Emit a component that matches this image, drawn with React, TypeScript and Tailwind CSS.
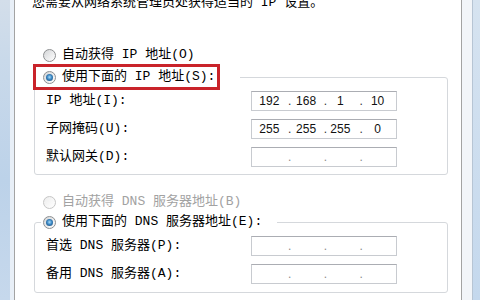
import type { ReactNode } from 'react';

const txt = "font-['Liberation_Mono','Noto_Sans_CJK_SC',monospace] text-[13px] leading-[16px]";

function Radio({ checked = false, disabled = false }: { checked?: boolean; disabled?: boolean }) {
  return (
    <span
      className={`flex h-[13px] w-[13px] shrink-0 items-center justify-center rounded-full border bg-gradient-to-br ${
        disabled ? 'border-[#c6c6c6] from-[#ededed] to-white' : 'border-[#8d8f91] from-[#d4d6d8] to-white'
      }`}
    >
      {checked && (
        <span className="h-[7px] w-[7px] rounded-full bg-[radial-gradient(circle_at_50%_45%,#a8dcfa_0%,#3a86c2_45%,#173f66_100%)]" />
      )}
    </span>
  );
}

function IpBox({ parts }: { parts?: string[] }) {
  const segs = parts ?? ['', '', '', ''];
  const dot = parts ? 'text-[#333]' : 'text-[#8c8c8c]';
  const Dot = () => <span className={`flex w-[2px] justify-center ${dot}`}>.</span>;
  return (
    <div className="flex h-[20px] w-[146px] items-center border border-[#c8cbd0] border-t-[#abadb3] bg-white font-['Liberation_Sans',sans-serif] text-[12px] leading-[18px] text-[#111]">
      <span className="w-[37px] pr-[2px] text-center">{segs[0]}</span>
      <Dot />
      <span className="w-[34px] pr-[3px] text-center">{segs[1]}</span>
      <Dot />
      <span className="w-[34px] pr-[6px] text-center">{segs[2]}</span>
      <Dot />
      <span className="w-[34px] pr-[3px] text-center">{segs[3]}</span>
    </div>
  );
}

function Row({ label, children }: { label: string; children: ReactNode }) {
  return (
    <div className="flex h-[20px] items-center">
      <span className={`${txt} w-[205px] text-black`}>{label}</span>
      {children}
    </div>
  );
}

export default function App() {
  return (
    <div className="flex h-[300px] w-[480px] overflow-hidden bg-white">
      <div className="w-[14px] bg-[linear-gradient(to_bottom,#d3deea_0%,#c9d9ea_20%,#bcd2e9_60%,#c6d8ec_100%)]">
        <div className="ml-[10px] h-full w-[4px] bg-[#e8eff7]" />
      </div>

      <div className="flex w-[448px] flex-col border-x border-[#a3a3a3] bg-white pl-[17px]">
        <p className={`${txt} -mt-[5px] text-black`}>您需要从网络系统管理员处获得适当的 IP 设置。</p>

        <div className="mt-[36px] ml-[11px] flex h-[16px] items-center gap-[6px]">
          <Radio />
          <span className={`${txt} text-black`}>自动获得 IP 地址(O)</span>
        </div>

        <fieldset className="mt-[1px] ml-[2px] w-[414px] rounded-[3px] border border-[#d5d8dc]">
          <legend className="-ml-[2px] pr-[20px]">
            <div className="flex h-[26px] w-[187px] items-center gap-[6px] border-[3px] border-[#c9232a] pl-[7px]">
              <Radio checked />
              <span className={`${txt} text-black`}>使用下面的 IP 地址(S):</span>
            </div>
          </legend>
          <div className="flex flex-col gap-[8px] pt-[1px] pb-[7px] pl-[11px]">
            <Row label="IP 地址(I):">
              <IpBox parts={['192', '168', '1', '10']} />
            </Row>
            <Row label="子网掩码(U):">
              <IpBox parts={['255', '255', '255', '0']} />
            </Row>
            <Row label="默认网关(D):">
              <IpBox />
            </Row>
          </div>
        </fieldset>

        <div className="mt-[19px] ml-[11px] flex h-[16px] items-center gap-[6px]">
          <Radio disabled />
          <span className={`${txt} text-[#a2a2a2]`}>自动获得 DNS 服务器地址(B)</span>
        </div>

        <fieldset className="mt-[4px] ml-[2px] w-[414px] rounded-[3px] border border-[#d5d8dc]">
          <legend className="ml-[6px] pr-[15px] pl-[2px]">
            <div className="flex h-[16px] items-center gap-[6px]">
              <Radio checked />
              <span className={`${txt} text-black`}>使用下面的 DNS 服务器地址(E):</span>
            </div>
          </legend>
          <div className="flex flex-col gap-[8px] pt-[6px] pb-[8px] pl-[11px]">
            <Row label="首选 DNS 服务器(P):">
              <IpBox />
            </Row>
            <Row label="备用 DNS 服务器(A):">
              <IpBox />
            </Row>
          </div>
        </fieldset>
      </div>

      <div className="w-[10px] bg-[#f2f5f9]" />
      <div className="flex-1 border-l border-[#b7c5d4] bg-[linear-gradient(to_bottom,#d6e3f0_0%,#c4d8ed_100%)]" />
    </div>
  );
}
